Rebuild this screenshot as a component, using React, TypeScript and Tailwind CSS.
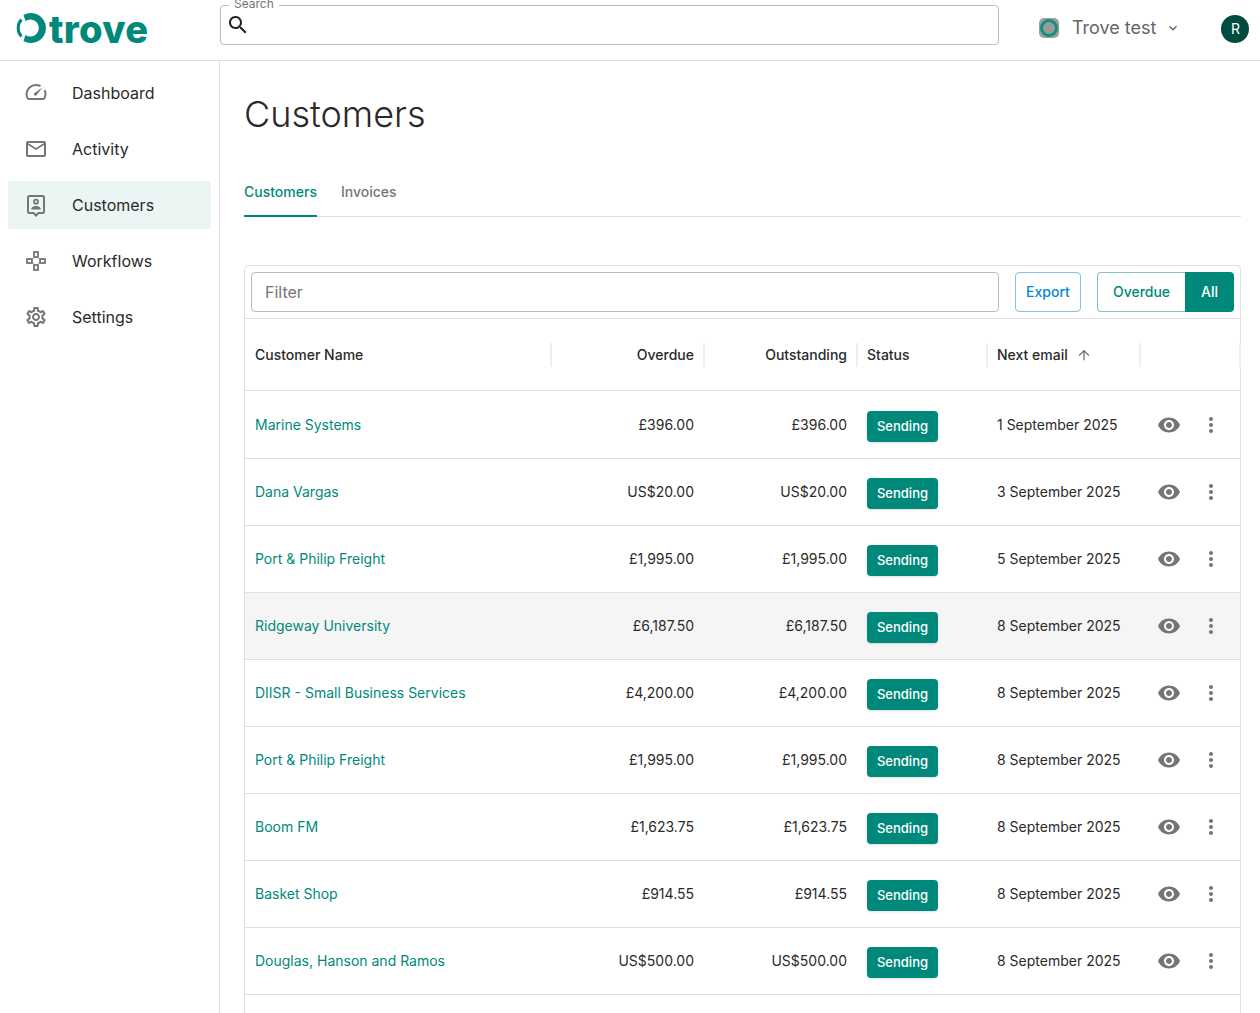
import React from "react";

const VISIBILITY = "M12 4.5C7 4.5 2.73 7.61 1 12c1.73 4.39 6 7.5 11 7.5s9.27-3.11 11-7.5c-1.73-4.39-6-7.5-11-7.5zM12 17c-2.76 0-5-2.24-5-5s2.24-5 5-5 5 2.24 5 5-2.24 5-5 5zm0-8c-1.66 0-3 1.34-3 3s1.34 3 3 3 3-1.34 3-3-1.34-3-3-3z";
const MORE_VERT = "M12 8c1.1 0 2-.9 2-2s-.9-2-2-2-2 .9-2 2 .9 2 2 2zm0 2c-1.1 0-2 .9-2 2s.9 2 2 2 2-.9 2-2-.9-2-2-2zm0 6c-1.1 0-2 .9-2 2s.9 2 2 2 2-.9 2-2-.9-2-2-2z";
const SEARCH = "M15.5 14h-.79l-.28-.27C15.41 12.59 16 11.11 16 9.5 16 5.91 13.09 3 9.5 3S3 5.91 3 9.5 5.91 16 9.5 16c1.61 0 3.09-.59 4.23-1.57l.27.28v.79l5 4.99L20.49 19l-4.99-5zm-6 0C7.01 14 5 11.99 5 9.5S7.01 5 9.5 5 14 7.01 14 9.5 11.99 14 9.5 14z";
const MAIL = "M20 4H4c-1.1 0-1.99.9-1.99 2L2 18c0 1.1.9 2 2 2h16c1.1 0 2-.9 2-2V6c0-1.1-.9-2-2-2zm0 14H4V8l8 5 8-5v10zm-8-7L4 6h16l-8 5z";
const ARROW_UP = "M4 12l1.41 1.41L11 7.83V20h2V7.83l5.58 5.59L20 12l-8-8-8 8z";
const CHEVRON = "M16.59 8.59L12 13.17 7.41 8.59 6 10l6 6 6-6z";
const SETTINGS = "M19.43 12.98c.04-.32.07-.64.07-.98 0-.34-.03-.66-.07-.98l2.11-1.65c.19-.15.24-.42.12-.64l-2-3.46c-.09-.16-.26-.25-.44-.25-.06 0-.12.01-.17.03l-2.49 1c-.52-.4-1.08-.73-1.69-.98l-.38-2.65C14.46 2.18 14.25 2 14 2h-4c-.25 0-.46.18-.49.42l-.38 2.65c-.61.25-1.17.59-1.69.98l-2.49-1c-.06-.02-.12-.03-.18-.03-.17 0-.34.09-.43.25l-2 3.46c-.13.22-.07.49.12.64l2.11 1.65c-.04.32-.07.65-.07.98 0 .33.03.66.07.98l-2.11 1.65c-.19.15-.24.42-.12.64l2 3.46c.09.16.26.25.44.25.06 0 .12-.01.17-.03l2.49-1c.52.4 1.08.73 1.69.98l.38 2.65c.03.24.24.42.49.42h4c.25 0 .46-.18.49-.42l.38-2.65c.61-.25 1.17-.59 1.69-.98l2.49 1c.06.02.12.03.18.03.17 0 .34-.09.43-.25l2-3.46c.12-.22.07-.49-.12-.64l-2.11-1.65zm-1.98-1.71c.04.31.05.52.05.73 0 .21-.02.43-.05.73l-.14 1.13.89.7 1.08.84-.7 1.21-1.27-.51-1.04-.42-.9.68c-.43.32-.84.56-1.25.73l-1.06.43-.16 1.13-.2 1.35h-1.4l-.19-1.35-.16-1.13-1.06-.43c-.43-.18-.83-.41-1.23-.71l-.91-.7-1.06.43-1.27.51-.7-1.21 1.08-.84.89-.7-.14-1.13c-.03-.31-.05-.54-.05-.74s.02-.43.05-.73l.14-1.13-.89-.7-1.08-.84.7-1.21 1.27.51 1.04.42.9-.68c.43-.32.84-.56 1.25-.73l1.06-.43.16-1.13.2-1.35h1.39l.19 1.35.16 1.13 1.06.43c.43.18.83.41 1.23.71l.91.7 1.06-.43 1.27-.51.7 1.21-1.07.85-.89.7.14 1.13zM12 8c-2.21 0-4 1.79-4 4s1.79 4 4 4 4-1.79 4-4-1.79-4-4-4zm0 6c-1.1 0-2-.9-2-2s.9-2 2-2 2 .9 2 2-.9 2-2 2z";

const Icon = ({ d, className }: { d: string; className: string }) => (
  <svg viewBox="0 0 24 24" fill="currentColor" className={className}>
    <path d={d} />
  </svg>
);

const GaugeIcon = () => (
  <svg viewBox="0 0 24 24" fill="none" stroke="currentColor" strokeWidth="2" className="size-6 text-[#757575]">
    <path d="M5 18h14c.7 0 1.200-.3 1.500-.9.7-1.300 1-2.800 1-4.100 0-1.400-.3-2.700-.8-3.900M16.500 5c-1.300-.6-2.900-1-4.500-1-5.300 0-9.500 4.200-9.500 9 0 1.300.3 2.800 1 4.100.3.600.8.9 1.500.9" />
    <path d="M18.500 6.500l-8.300 5.800c-1.200 1 .7 3.300 2 2.300z" fill="currentColor" stroke="none" />
  </svg>
);

const ContactIcon = () => (
  <svg viewBox="0 0 24 24" fill="none" className="size-6 text-[#757575]">
    <path d="M5.500 3h13c.8 0 1.500.7 1.500 1.500v14c0 .8-.7 1.500-1.500 1.500h-4l-2.500 2.500L9.500 20h-4c-.8 0-1.500-.7-1.500-1.500v-14C4 3.700 4.700 3 5.500 3z" stroke="currentColor" strokeWidth="2" />
    <circle cx="12" cy="8.700" r="2" stroke="currentColor" strokeWidth="1.700" />
    <path d="M7 16.500c.4-2.400 2.500-3.500 5-3.500s4.600 1.100 5 3.500H7z" fill="currentColor" />
  </svg>
);

const WorkflowIcon = () => (
  <svg viewBox="0 0 24 24" fill="none" stroke="currentColor" strokeWidth="1.800" className="size-6 text-[#757575]">
    <rect x="10" y="3" width="4" height="5" />
    <rect x="10" y="16" width="4" height="5" />
    <rect x="3" y="10" width="5" height="4" />
    <rect x="16" y="10" width="5" height="4" />
    <path d="M9 9l1.500 1.500M15 9l-1.500 1.500M9 15l1.500-1.500M15 15l-1.500-1.500" strokeWidth="1" opacity="0.45" />
  </svg>
);

const Logo = () => (
  <div className="flex items-center pl-[15px] w-[220px] shrink-0 mb-1">
    <svg viewBox="0 0 32 32" className="size-[32px] shrink-0">
      <path d="M8.500 3A15 15 0 1 1 8.500 29L10.500 23A8.500 8.500 0 1 0 10.500 9Z" fill="#00897b" />
      <path d="M6.500 7.500A12.500 12.500 0 0 0 6.500 24.500" fill="none" stroke="#00897b" strokeWidth="3" />
    </svg>
    <span className="ml-[2px] mt-[2px] font-['Inter',sans-serif] text-[38px] leading-none font-extrabold tracking-[0.3px] text-[#00897b]">trove</span>
  </div>
);

const navItems = [
  { label: "Dashboard", icon: <GaugeIcon /> },
  { label: "Activity", icon: <Icon d={MAIL} className="size-6 text-[#757575]" /> },
  { label: "Customers", icon: <ContactIcon />, active: true },
  { label: "Workflows", icon: <WorkflowIcon /> },
  { label: "Settings", icon: <Icon d={SETTINGS} className="size-6 text-[#757575]" /> },
];

const rows = [
  ["Marine Systems", "£396.00", "1 September 2025"],
  ["Dana Vargas", "US$20.00", "3 September 2025"],
  ["Port & Philip Freight", "£1,995.00", "5 September 2025"],
  ["Ridgeway University", "£6,187.50", "8 September 2025"],
  ["DIISR - Small Business Services", "£4,200.00", "8 September 2025"],
  ["Port & Philip Freight", "£1,995.00", "8 September 2025"],
  ["Boom FM", "£1,623.75", "8 September 2025"],
  ["Basket Shop", "£914.55", "8 September 2025"],
  ["Douglas, Hanson and Ramos", "US$500.00", "8 September 2025"],
];

const COLS = "grid grid-cols-[306px_153px_153px_130px_153px_100px]";

const HeaderCell = ({ children, right }: { children?: React.ReactNode; right?: boolean }) => (
  <div className={`relative flex items-center h-full px-[10px] ${right ? "justify-end" : ""}`}>
    {children}
    <span className="absolute -right-px top-6 h-6 w-[2px] bg-[#eeeeee]" />
  </div>
);

export default function App() {
  return (
    <div className="h-screen overflow-hidden bg-white font-['Inter',sans-serif] text-[#2a2a2a]">
      <header className="flex items-center h-[61px] border-b border-[#e0e0e0]">
        <Logo />
        <div className="relative self-start mt-[5px] w-[779px] h-10 border border-[#bdbdbd] rounded flex items-center pl-[5px]">
          <span className="absolute -top-[9px] left-[8px] bg-white px-[5px] text-xs leading-[14px] text-[#757575]">Search</span>
          <Icon d={SEARCH} className="size-6 text-[#212121]" />
        </div>
        <div className="ml-10 mb-1 flex items-center">
          <div className="size-5 rounded-[5px] bg-[#9e9e9e] flex items-center justify-center">
            <div className="size-[18px] rounded-full border-[3px] border-[#0f9182] bg-[#9a9a9a]" />
          </div>
          <span className="ml-[13px] text-lg text-[#666666]">Trove test</span>
          <Icon d={CHEVRON} className="ml-[9px] size-4 text-[#666666]" />
        </div>
        <div className="ml-10 mb-[2px] size-7 rounded-full bg-[#004d40] text-white text-sm flex items-center justify-center">R</div>
      </header>

      <div className="flex h-[952px]">
        <aside className="w-[220px] shrink-0 border-r border-[#e0e0e0] px-2 pt-2 flex flex-col gap-2">
          {navItems.map((item) => (
            <div key={item.label} className={`flex items-center w-[203px] h-12 pl-4 gap-6 text-base ${item.active ? "bg-[#ebf5f3]" : ""}`}>
              {item.icon}
              <span>{item.label}</span>
            </div>
          ))}
        </aside>

        <main className="flex-1 pl-6 pr-[19px] min-w-0">
          <h1 className="mt-[29px] text-[36px] leading-[48px] font-light">Customers</h1>

          <div className="mt-8 flex gap-6 h-[47px] border-b border-[#e0e0e0] text-sm font-medium">
            <div className="h-[47px] pt-3 border-b-2 border-[#00897b] text-[#00897b]">Customers</div>
            <div className="pt-3 text-[#757575]">Invoices</div>
          </div>

          <div className="mt-12 border border-[#e0e0e0] rounded-t">
            <div className="flex items-center h-[53px] px-[6px] pb-px border-b border-[#e0e0e0]">
              <div className="w-[748px] h-10 border border-[#bdbdbd] rounded flex items-center px-[13px] text-base text-[#757575]">Filter</div>
              <button className="ml-4 w-[66px] h-10 border border-[#81c4ea] rounded text-sm font-medium text-[#0288d1]">Export</button>
              <div className="ml-4 flex h-10 text-sm font-medium">
                <button className="w-[88px] border border-r-0 border-[#80c4bd] rounded-l text-[#00897b]">Overdue</button>
                <button className="w-[49px] bg-[#00897b] rounded-r text-white">All</button>
              </div>
            </div>

            <div className={`${COLS} h-[72px] border-b border-[#e0e0e0] text-sm font-medium`}>
              <HeaderCell>Customer Name</HeaderCell>
              <HeaderCell right>Overdue</HeaderCell>
              <HeaderCell right>Outstanding</HeaderCell>
              <HeaderCell>Status</HeaderCell>
              <HeaderCell>
                Next email
                <Icon d={ARROW_UP} className="ml-2 size-4 text-[#757575]" />
              </HeaderCell>
              <HeaderCell />
            </div>

            {rows.map(([name, amount, date], i) => (
              <div key={i} className={`${COLS} items-center ${i === 0 ? "h-[68px]" : "h-[67px]"} border-b border-[#e0e0e0] text-sm ${i === 3 ? "bg-[#f5f5f5]" : ""}`}>
                <div className="px-[10px] text-[#00897b]">{name}</div>
                <div className="px-[10px] text-right">{amount}</div>
                <div className="px-[10px] text-right">{amount}</div>
                <div className={`px-[10px] ${i === 0 ? "pt-1" : "pt-[3px]"}`}>
                  <span className="inline-flex items-center justify-center w-[71px] h-[31px] rounded bg-[#00897b] text-white text-[13px] font-medium shadow-sm">Sending</span>
                </div>
                <div className="px-[10px]">{date}</div>
                <div className="flex items-center pl-[17px]">
                  <Icon d={VISIBILITY} className="size-6 text-[#757575]" />
                  <Icon d={MORE_VERT} className="ml-[18px] size-6 text-[#757575]" />
                </div>
              </div>
            ))}
            <div className="h-[67px]" />
          </div>
        </main>
      </div>
    </div>
  );
}
